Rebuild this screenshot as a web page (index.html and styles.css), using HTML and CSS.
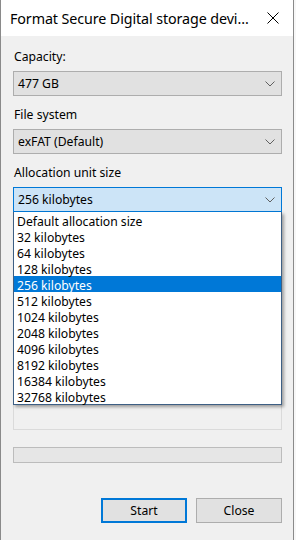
FILE: index.html
```html
<!DOCTYPE html>
<html>
<head>
<meta charset="utf-8">
<link rel="stylesheet" href="styles.css">
</head>
<body>
<div class="dialog">
  <div class="titlebar">
    <span class="title">Format Secure Digital storage devi...</span>
    <svg class="close" width="12" height="12" viewBox="0 0 12 12"><path d="M0.5 0.5 L11.5 11.5 M11.5 0.5 L0.5 11.5" stroke="#000" stroke-width="1" fill="none"/></svg>
  </div>
  <div class="body">
    <div class="label">Capacity:</div>
    <div class="combo"><span>477 GB</span><svg class="chev" width="10" height="6" viewBox="0 0 10 6"><path d="M0.5 0.5 L5 5 L9.5 0.5" stroke="#606060" fill="none"/></svg></div>
    <div class="label">File system</div>
    <div class="combo"><span>exFAT (Default)</span><svg class="chev" width="10" height="6" viewBox="0 0 10 6"><path d="M0.5 0.5 L5 5 L9.5 0.5" stroke="#606060" fill="none"/></svg></div>
    <div class="label">Allocation unit size</div>
    <div class="combo-wrap">
      <div class="combo active"><span>256 kilobytes</span><svg class="chev" width="10" height="6" viewBox="0 0 10 6"><path d="M0.5 0.5 L5 5 L9.5 0.5" stroke="#606060" fill="none"/></svg></div>
      <ul class="list">
        <li>Default allocation size</li>
        <li>32 kilobytes</li>
        <li>64 kilobytes</li>
        <li>128 kilobytes</li>
        <li class="sel">256 kilobytes</li>
        <li>512 kilobytes</li>
        <li>1024 kilobytes</li>
        <li>2048 kilobytes</li>
        <li>4096 kilobytes</li>
        <li>8192 kilobytes</li>
        <li>16384 kilobytes</li>
        <li>32768 kilobytes</li>
      </ul>
    </div>
    <div class="group"></div>
    <div class="progress"></div>
    <div class="buttons">
      <button class="btn default">Start</button>
      <button class="btn">Close</button>
    </div>
  </div>
</div>
</body>
</html>
```
FILE: styles.css
```css
html, body {
  margin: 0;
  padding: 0;
  height: 100%;
}
body {
  background: #f7f7f7;
  font-family: "Segoe UI", "Noto Sans", "Open Sans", sans-serif;
  font-size: 12.2px;
  color: #000;
  display: flex;
}
.dialog {
  width: 292px;
  height: 540px;
  border-left: 1px solid #8a8a8a;
  border-right: 1px solid #8a8a8a;
  background: #f0f0f0;
  display: flex;
  flex-direction: column;
}
.titlebar {
  height: 36px;
  background: #fff;
  display: flex;
  align-items: center;
  justify-content: space-between;
  padding: 0 14px 0 9px;
  box-sizing: border-box;
}
.title {
  font-size: 14.3px;
  letter-spacing: -0.1px;
  margin-top: 1px;
}
.close {
  display: block;
  margin-top: 0;
}
.body {
  padding: 13px 11px 0 12px;
  display: flex;
  flex-direction: column;
}
.label {
  height: 16px;
  line-height: 16px;
  margin-bottom: 6px;
  padding-left: 1px;
}
.combo {
  height: 25px;
  box-sizing: border-box;
  border: 1px solid #adadad;
  background: #e1e1e1;
  display: flex;
  align-items: center;
  justify-content: space-between;
  padding: 0 6px 0 4px;
  margin-bottom: 11px;
}
.chev { display: block; }
.combo-wrap {
  position: relative;
}
.combo.active {
  background: #cce4f7;
  border-color: #0078d7;
  margin-bottom: 0;
}
.list {
  position: absolute;
  left: 0;
  right: 0;
  top: 25px;
  margin: 0;
  padding: 0;
  list-style: none;
  background: #fff;
  border: 1px solid #3d5f84;
  border-top: none;
  box-shadow: 2px 2px 3px rgba(0,0,0,0.35);
  z-index: 2;
}
.list li {
  height: 14px;
  padding-top: 2px;
  line-height: 16px;
  padding-left: 3px;
}
.list li.sel {
  background: #0078d7;
  color: #fff;
}
.group {
  margin-top: 24px;
  height: 194px;
  box-sizing: border-box;
  border: 1px solid #dadada;
}
.progress {
  margin-top: 17px;
  height: 16px;
  box-sizing: border-box;
  border: 1px solid #bcbcbc;
  background: #e6e6e6;
}
.buttons {
  margin-top: 35px;
  display: flex;
  justify-content: flex-end;
  gap: 9px;
}
.btn {
  width: 86px;
  height: 25px;
  box-sizing: border-box;
  border: 1px solid #adadad;
  background: #e1e1e1;
  font-family: inherit;
  font-size: 12.2px;
  color: #000;
  padding: 0;
}
.btn.default {
  border: 2px solid #0078d7;
}
```
